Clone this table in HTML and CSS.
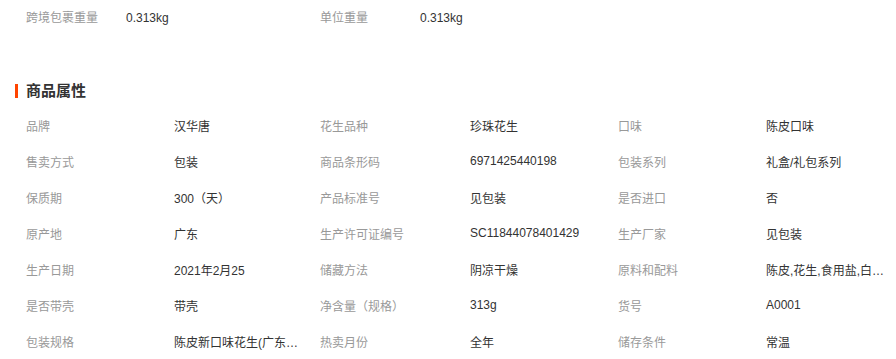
FILE: index.html
```html
<!DOCTYPE html>
<html lang="zh-CN">
<head>
<meta charset="utf-8">
<link rel="stylesheet" href="styles.css">
</head>
<body>
<div class="page">
  <div class="pack-row">
    <span class="pk-label">跨境包裹重量</span><span class="pk-value">0.313kg</span>
    <span class="pk-label">单位重量</span><span class="pk-value">0.313kg</span>
  </div>
  <h2 class="title">商品属性</h2>
  <div class="attrs">
    <span class="lbl">品牌</span><span class="val">汉华唐</span>
    <span class="lbl">花生品种</span><span class="val">珍珠花生</span>
    <span class="lbl">口味</span><span class="val">陈皮口味</span>

    <span class="lbl">售卖方式</span><span class="val">包装</span>
    <span class="lbl">商品条形码</span><span class="val">6971425440198</span>
    <span class="lbl">包装系列</span><span class="val">礼盒/礼包系列</span>

    <span class="lbl">保质期</span><span class="val">300（天）</span>
    <span class="lbl">产品标准号</span><span class="val">见包装</span>
    <span class="lbl">是否进口</span><span class="val">否</span>

    <span class="lbl">原产地</span><span class="val">广东</span>
    <span class="lbl">生产许可证编号</span><span class="val">SC11844078401429</span>
    <span class="lbl">生产厂家</span><span class="val">见包装</span>

    <span class="lbl">生产日期</span><span class="val">2021年2月25</span>
    <span class="lbl">储藏方法</span><span class="val">阴凉干燥</span>
    <span class="lbl">原料和配料</span><span class="val" title="陈皮,花生,食用盐,白砂糖">陈皮,花生,食用盐,白…</span>

    <span class="lbl">是否带壳</span><span class="val">带壳</span>
    <span class="lbl">净含量（规格）</span><span class="val">313g</span>
    <span class="lbl">货号</span><span class="val">A0001</span>

    <span class="lbl">包装规格</span><span class="val" title="陈皮新口味花生(广东特产)">陈皮新口味花生(广东…</span>
    <span class="lbl">热卖月份</span><span class="val">全年</span>
    <span class="lbl">储存条件</span><span class="val">常温</span>
  </div>
</div>
</body>
</html>
```

FILE: styles.css
```css
html, body {
  margin: 0;
  padding: 0;
  background: #fff;
}
body {
  font-family: "Liberation Sans", Arial, "Noto Sans CJK SC", sans-serif;
  font-size: 12px;
  color: #333;
}
.page {
  padding: 0 0 0 26px;
}
.pack-row {
  display: flex;
  align-items: center;
  height: 36px;
  line-height: 36px;
}
.pk-label {
  width: 100px;
  color: #999;
}
.pk-value {
  width: 194px;
  color: #333;
}
.title {
  position: relative;
  margin: 45px 0 6px 0;
  font-size: 15px;
  line-height: 20px;
  height: 20px;
  font-weight: bold;
  color: #333;
}
.title::before {
  content: "";
  position: absolute;
  left: -11px;
  top: 3px;
  width: 3px;
  height: 14px;
  background: #ff4400;
}
.attrs {
  display: grid;
  grid-template-columns: 148px 146px 150px 148px 148px 130px;
  grid-auto-rows: 36px;
  align-items: center;
}
.lbl {
  color: #999;
  white-space: nowrap;
}
.val {
  color: #333;
  white-space: nowrap;
}
```
